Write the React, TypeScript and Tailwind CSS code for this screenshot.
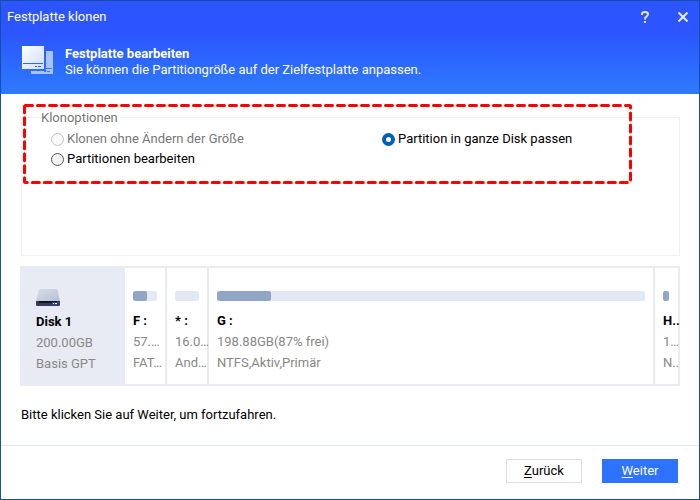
const partitions = [
  { name: "F :", size: "57.…", type: "FAT…", used: 58, cell: "w-[42px]", bar: "mr-2" },
  { name: "* :", size: "16.0…", type: "And…", used: 0, cell: "w-[42px]", bar: "mr-2" },
  { name: "G :", size: "198.88GB(87% frei)", type: "NTFS,Aktiv,Primär", used: 12.6, cell: "min-w-0 flex-1", bar: "mr-2" },
  { name: "H..", size: "1…", type: "N..", used: 100, cell: "w-[23px]", bar: "w-[6px]" },
]

function CloneIcon() {
  return (
    <svg width="32" height="33" viewBox="0 -1 32 33" aria-hidden="true">
      <defs>
        <linearGradient id="front" x1="0" y1="0" x2="1" y2="1">
          <stop offset="0" stopColor="#ffffff" />
          <stop offset="1" stopColor="#cfdcf8" />
        </linearGradient>
      </defs>
      <path d="M25 5h7v23H10v-3h15z" fill="#a9c3fc" />
      <path d="M24 22.500h7" stroke="#3a72fb" />
      <path d="M23 25.500h2M26 25.500h3" stroke="#3a72fb" />
      <path d="M1 0h22v23H1z" fill="url(#front)" />
      <path d="M2 17.500h20" stroke="#2f68fa" />
      <path d="M14 20.500h2M17 20.500h3" stroke="#2f68fa" />
    </svg>
  )
}

function DiskIcon() {
  return (
    <svg width="24" height="17" viewBox="0 0 24 17" aria-hidden="true">
      <defs>
        <linearGradient id="lid" x1="0" y1="0" x2="1" y2="1">
          <stop offset="0" stopColor="#d9deeb" />
          <stop offset="1" stopColor="#b5bfd2" />
        </linearGradient>
      </defs>
      <path d="M4 0h16q1.200 0 1.500 1L24 12H0L2.500 1Q2.800 0 4 0z" fill="url(#lid)" />
      <path d="M0 12h24v4q0 1-1 1H1q-1 0-1-1z" fill="#363e57" />
      <path d="M3 12h18v2H3z" fill="#10131e" />
      <path d="M16 13h6v3h-6z" fill="#23449b" />
      <path d="M17 14.500h1M19 14.500h2" stroke="#ffffff" />
    </svg>
  )
}

function Option({ label, checked, disabled }: { label: string; checked?: boolean; disabled?: boolean }) {
  return (
    <label className={`flex h-5 items-center gap-[3px] ${disabled ? "text-[#777777]" : "text-black"}`}>
      <input
        type="radio"
        name="clone"
        defaultChecked={checked}
        disabled={disabled}
        className="size-[13px] shrink-0 appearance-none rounded-full border border-[#555555] bg-[#f3f3f3] checked:border-4 checked:border-[#005fb8] checked:bg-white disabled:border-[#c3c3c3] disabled:bg-[#fafafa]"
      />
      {label}
    </label>
  )
}

export default function App() {
  return (
    <div className="flex min-h-screen flex-col border border-[#164fa5] bg-white font-['Roboto',sans-serif] text-[13px] leading-4 text-black">
      {/* Header */}
      <header className="h-[93px] bg-linear-to-b from-[#2d55ff] from-35% to-[#2e7aff] text-white">
        <div className="flex h-8 items-center pr-2 pl-[6px]">
          <h1 className="flex-1">Festplatte klonen</h1>
          <button type="button" aria-label="Hilfe" className="mr-[22px] flex size-4 items-center justify-center">
            <svg width="10" height="12" viewBox="0 0 10 12" fill="none" stroke="#e6ebff" strokeWidth="2">
              <path d="M2 4V3q0-2 3-2t3 2q0 1.500-1.500 2.500T5 8.500M5 10v2" />
            </svg>
          </button>
          <button type="button" aria-label="Schließen" className="flex size-4 items-center justify-center">
            <svg width="10" height="10" viewBox="0 0 10 10" stroke="#e6ebff" strokeWidth="2">
              <path d="M.5.5l9 9M9.500.5l-9 9" />
            </svg>
          </button>
        </div>
        <div className="flex items-center gap-3 pt-3 pl-5">
          <CloneIcon />
          <div>
            <h2 className="font-bold">Festplatte bearbeiten</h2>
            <p>Sie können die Partitiongröße auf der Zielfestplatte anpassen.</p>
          </div>
        </div>
      </header>

      <main className="relative flex-1 px-[19px] pt-4">
        {/* Clone options */}
        <fieldset className="ml-px h-[146px] border border-[#f0f2f6] pr-5 pl-[29px]">
          <legend className="-ml-3 px-[2px] pt-[2px] leading-3 text-[#777777]">Klonoptionen</legend>
          <div className="grid grid-cols-[331px_1fr] pt-[5px]">
            <Option label="Klonen ohne Ändern der Größe" disabled />
            <Option label="Partition in ganze Disk passen" checked />
            <Option label="Partitionen bearbeiten" />
          </div>
        </fieldset>

        {/* Highlight around the options */}
        <div className="pointer-events-none absolute top-[11px] right-[69px] left-[23px] h-[77px]">
          <svg width="100%" height="100%" className="overflow-visible" fill="none" stroke="#ff0000" strokeWidth="3">
            <rect x=".5" y=".5" width="100%" height="100%" rx="1" strokeDasharray="7 5" strokeLinecap="round" />
          </svg>
        </div>

        {/* Disk layout */}
        <section className="mt-[10px] flex h-[120px] border-2 border-[#e8ebf3] leading-[21px] text-[#888888]">
          <div className="w-[103px] bg-[#e8ebf3] pt-[21px] pl-[14px]">
            <DiskIcon />
            <h3 className="mt-[5px] font-bold text-black">Disk 1</h3>
            <p>200.00GB</p>
            <p>Basis GPT</p>
          </div>
          {partitions.map((p) => (
            <div
              key={p.name}
              className={`border-r-2 border-[#e8ebf3] pt-[23px] pl-2 whitespace-nowrap last:border-r-0 ${p.cell}`}
            >
              <div className={`h-[10px] overflow-hidden rounded-[2px] bg-[#e2e9f4] ${p.bar}`}>
                <div className="h-full rounded-[2px] bg-[#91a5c5]" style={{ width: `${p.used}%` }} />
              </div>
              <h3 className="mt-[9px] font-bold text-black">{p.name}</h3>
              <p>{p.size}</p>
              <p>{p.type}</p>
            </div>
          ))}
        </section>

        <p className="mt-[21px] ml-px">Bitte klicken Sie auf Weiter, um fortzufahren.</p>
      </main>

      <footer className="flex h-[54px] justify-end gap-5 border-t border-[#e3e7f0] pt-[13px] pr-[21px]">
        <button type="button" className="h-6 w-[76px] border border-[#d9dfeb]">
          <u className="underline-offset-2">Z</u>urück
        </button>
        <button type="button" className="h-6 w-[76px] bg-[#2d73ff] text-white">
          <u className="underline-offset-2">W</u>eiter
        </button>
      </footer>
    </div>
  )
}
